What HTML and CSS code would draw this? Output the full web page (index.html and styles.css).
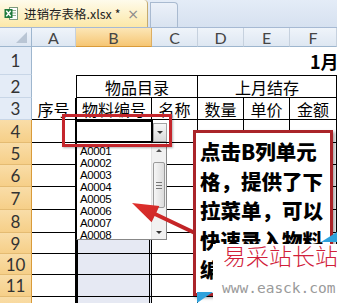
FILE: index.html
```html
<!DOCTYPE html>
<html lang="zh">
<head>
    <meta charset="UTF-8">
    <title>进销存表格.xlsx</title>
    <link rel="stylesheet" href="styles.css">
</head>
<body>
<div class="page">
    <div class="tabbar">
        <div class="tab-file">
            <svg class="xl-icon" width="15" height="15" viewBox="0 0 15 15">
                <rect x="5.5" y="1.5" width="8" height="12" fill="#fff" stroke="#7d9a7d"/>
                <path d="M8 4.5h4M8 7h4M8 9.5h4" stroke="#8fb08f" stroke-width="1"/>
                <rect x="0.5" y="3" width="8" height="9" fill="#1f7a3d"/>
                <path d="M2.3 4.8L6.7 10.2M6.7 4.8L2.3 10.2" stroke="#fff" stroke-width="1.4"/>
            </svg>
            <span class="tab-name">进销存表格.xlsx *</span>
            <span class="tab-close">×</span>
        </div>
        <div class="tab-blank"></div>
    </div>

    <div class="grid">
        <!-- column headers -->
        <div class="corner"><span class="corner-tri"></span></div>
        <div class="ch">A</div>
        <div class="ch on">B</div>
        <div class="ch">C</div>
        <div class="ch">D</div>
        <div class="ch">E</div>
        <div class="ch">F</div>

        <!-- row 1 -->
        <div class="rh">1</div>
        <div class="c title">1月份进销存统计表</div>

        <!-- row 2 -->
        <div class="rh">2</div>
        <div class="c"></div>
        <div class="c t tt tl span2">物品目录</div>
        <div class="c t tt span3">上月结存</div>

        <!-- row 3 -->
        <div class="rh">3</div>
        <div class="c t">序号</div>
        <div class="c t tl">物料编号</div>
        <div class="c t">名称</div>
        <div class="c t">数量</div>
        <div class="c t">单价</div>
        <div class="c t">金额</div>

        <div class="rh on">4</div>
        <div class="c t"></div><div class="c t tl"></div><div class="c t"></div><div class="c t"></div><div class="c t"></div><div class="c t"></div>
        <div class="rh on">5</div>
        <div class="c t"></div><div class="c t tl sel"></div><div class="c t"></div><div class="c t"></div><div class="c t"></div><div class="c t"></div>
        <div class="rh on">6</div>
        <div class="c t"></div><div class="c t tl sel"></div><div class="c t"></div><div class="c t"></div><div class="c t"></div><div class="c t"></div>
        <div class="rh on">7</div>
        <div class="c t"></div><div class="c t tl sel"></div><div class="c t"></div><div class="c t"></div><div class="c t"></div><div class="c t"></div>
        <div class="rh on">8</div>
        <div class="c t"></div><div class="c t tl sel"></div><div class="c t"></div><div class="c t"></div><div class="c t"></div><div class="c t"></div>
        <div class="rh on">9</div>
        <div class="c t"></div><div class="c t tl sel"></div><div class="c t"></div><div class="c t"></div><div class="c t"></div><div class="c t"></div>
        <div class="rh on">10</div>
        <div class="c t"></div><div class="c t tl sel"></div><div class="c t"></div><div class="c t"></div><div class="c t"></div><div class="c t"></div>
        <div class="rh on">11</div>
        <div class="c t"></div><div class="c t tl sel"></div><div class="c t"></div><div class="c t"></div><div class="c t"></div><div class="c t"></div>
        <div class="rh on"></div>
        <div class="c t"></div><div class="c t tl sel"></div><div class="c t"></div><div class="c t"></div><div class="c t"></div><div class="c t"></div>
    </div>

    <!-- overlays: selection, dropdown, annotations -->
    <div class="selbox"></div>
    <div class="active-cell"></div>
    <div class="dd-btn"><span class="tri-down"></span></div>

    <div class="ddlist">
        <div class="dd-items">
            <div>A0001</div>
            <div>A0002</div>
            <div>A0003</div>
            <div>A0004</div>
            <div>A0005</div>
            <div>A0006</div>
            <div>A0007</div>
            <div>A0008</div>
        </div>
        <div class="dd-scroll">
            <div class="sb-arrow"><span class="tri-up"></span></div>
            <div class="sb-track">
                <div class="sb-thumb"><span class="grip"></span></div>
            </div>
            <div class="sb-arrow"><span class="tri-down"></span></div>
        </div>
    </div>

    <div class="redbox"></div>

    <svg class="arrow" width="337" height="303" viewBox="0 0 337 303">
        <defs>
            <linearGradient id="ar" x1="0" y1="0" x2="1" y2="1">
                <stop offset="0" stop-color="#e0302c"/>
                <stop offset="1" stop-color="#b81f24"/>
            </linearGradient>
        </defs>
        <polygon points="132,203 159.4,206.1 156.4,212.4 195.9,231.2 194.1,234.8 154.6,216 151.6,222.3" fill="url(#ar)"/>
    </svg>

    <div class="callout">点击B列单元<br>格，提供了下<br>拉菜单，可以<br>快速录入物料<br>编号等信息</div>

    <div class="watermark">
        <div class="wm-cn">易采站长站</div>
        <div class="wm-url">www.easck.com</div>
    </div>
</div>
</body>
</html>
```

FILE: styles.css
```css
body {
    margin: 0;
    background: #fff;
    font-family: "Noto Sans CJK SC", sans-serif;
    color: #000;
}

.page {
    position: relative;
    width: 337px;
    height: 303px;
    overflow: hidden;
}

/* workbook tab strip */
.tabbar {
    height: 28px;
    display: flex;
    align-items: flex-end;
    background: linear-gradient(#e4ecf7, #d6e1f0);
    border-bottom: 1px solid #a6b9d3;
    box-sizing: border-box;
}

.tab-file {
    width: 148px;
    height: 27px;
    display: flex;
    align-items: center;
    padding-left: 4px;
    box-sizing: border-box;
    background: linear-gradient(#fefbec, #fce8a8);
    border-right: 1px solid #c5ab70;
    border-radius: 0 4px 0 0;
}

.xl-icon {
    flex: none;
}

.tab-name {
    margin-left: 5px;
    font-size: 12.5px;
    color: #1e1e1e;
    white-space: nowrap;
}

.tab-close {
    margin-left: auto;
    margin-right: 8px;
    font-family: "DejaVu Sans", sans-serif;
    font-size: 14px;
    color: #8a8a8a;
}

.tab-blank {
    width: 28px;
    height: 25px;
    margin-left: 2px;
    box-sizing: border-box;
    background: linear-gradient(#ecf1f9, #d9e3f0);
    border: 1px solid #a9bad0;
    border-bottom: none;
    border-radius: 0 4px 0 0;
}

/* sheet grid */
.grid {
    display: grid;
    grid-template-columns: 32px 44px 76px 46px 46px 46px 47px;
    grid-template-rows: 19px 28px 23px 22px 23px 22px 22px 23px 23px 21px 21px 22px 22px;
}

.corner {
    display: flex;
    align-items: flex-end;
    justify-content: flex-end;
    padding: 0 4px 3px 0;
    box-sizing: border-box;
    background: linear-gradient(#eef3fa, #dde6f2);
    border-right: 1px solid #9eb6ce;
    border-bottom: 1px solid #9eb6ce;
}

.corner-tri {
    width: 0;
    height: 0;
    border-left: 11px solid transparent;
    border-bottom: 11px solid #b9c5d4;
}

.ch {
    display: flex;
    align-items: center;
    justify-content: center;
    box-sizing: border-box;
    background: linear-gradient(#eff4fa, #dee7f2);
    border-right: 1px solid #c6d1de;
    border-bottom: 1px solid #9eb6ce;
    font-family: Lato, sans-serif;
    font-size: 16px;
    color: #454545;
}

.ch.on {
    background: linear-gradient(#fce6b6, #f6c674);
    border-right-color: #dcae62;
    border-bottom-color: #d99b3a;
}

.rh {
    display: flex;
    align-items: center;
    justify-content: center;
    box-sizing: border-box;
    background: #e4ecf7;
    border-right: 1px solid #9eb6ce;
    border-bottom: 1px solid #c8d6e7;
    font-family: Lato, sans-serif;
    font-size: 17px;
    color: #333;
}

.rh.on {
    background: linear-gradient(#f9dda8, #f6cf88);
    border-right-color: #d99b3a;
    border-bottom-color: #e4bb72;
}

.c {
    display: flex;
    align-items: center;
    justify-content: center;
    box-sizing: border-box;
    font-size: 16px;
    white-space: nowrap;
    overflow: hidden;
}

.t {
    border-right: 1px solid #000;
    border-bottom: 1px solid #000;
}

.tt {
    border-top: 1px solid #000;
}

.tl {
    border-left: 1px solid #000;
}

.span2 {
    grid-column: span 2;
}

.span3 {
    grid-column: span 3;
}

.title {
    grid-column: span 6;
    justify-content: flex-start;
    padding-left: 278px;
    font-size: 18px;
    font-weight: bold;
}

.sel {
    background: #e6e9f3;
}

/* selection and active cell */
.selbox {
    position: absolute;
    left: 77px;
    top: 120px;
    width: 73px;
    height: 183px;
    box-sizing: border-box;
    border-left: 1px solid #000;
    border-right: 1px solid #000;
}

.active-cell {
    position: absolute;
    left: 75px;
    top: 120px;
    width: 78px;
    height: 23px;
    box-sizing: border-box;
    background: #fff;
    border: 2px solid #000;
    box-shadow: inset 0 0 0 1px #fff;
}

.dd-btn {
    position: absolute;
    left: 153px;
    top: 123px;
    width: 14px;
    height: 19px;
    box-sizing: border-box;
    display: flex;
    align-items: center;
    justify-content: center;
    background: linear-gradient(#f7f7f7, #dadada);
    border: 1px solid #a3a3a3;
}

.tri-down {
    width: 0;
    height: 0;
    border-left: 3px solid transparent;
    border-right: 3px solid transparent;
    border-top: 3px solid #333;
}

.tri-up {
    width: 0;
    height: 0;
    border-left: 3px solid transparent;
    border-right: 3px solid transparent;
    border-bottom: 3px solid #555;
}

/* dropdown list */
.ddlist {
    position: absolute;
    left: 76px;
    top: 143px;
    width: 91px;
    height: 97px;
    box-sizing: border-box;
    display: flex;
    background: #fff;
    border-left: 1px solid #000;
    border-right: 1px solid #888;
    border-bottom: 1px solid #888;
}

.dd-items {
    flex: 1;
    padding: 2px 0 0 3px;
    font-family: "Liberation Sans", sans-serif;
    font-size: 11.5px;
    line-height: 12px;
    letter-spacing: -0.4px;
}

.dd-scroll {
    width: 14px;
    display: flex;
    flex-direction: column;
    background: #f1f1f1;
    border-left: 1px solid #e2e2e2;
}

.sb-arrow {
    height: 14px;
    display: flex;
    align-items: center;
    justify-content: center;
}

.sb-track {
    flex: 1;
    padding-top: 5px;
}

.sb-thumb {
    height: 46px;
    margin: 0 1px;
    box-sizing: border-box;
    display: flex;
    align-items: center;
    justify-content: center;
    background: linear-gradient(90deg, #f6f6f6, #dcdcdc);
    border: 1px solid #9b9b9b;
    border-radius: 2px;
}

.grip {
    width: 6px;
    height: 5px;
    border-top: 1px solid #777;
    border-bottom: 1px solid #777;
    background: linear-gradient(#777, #777) center / 6px 1px no-repeat;
}

/* annotations */
.redbox {
    position: absolute;
    left: 62px;
    top: 114px;
    width: 110px;
    height: 33px;
    box-sizing: border-box;
    border: 3px solid #c4262c;
    box-shadow: 1px 1px 2px rgba(0, 0, 0, 0.3);
}

.arrow {
    position: absolute;
    left: 0;
    top: 0;
}

.callout {
    position: absolute;
    left: 193px;
    top: 130px;
    width: 140px;
    height: 166px;
    box-sizing: border-box;
    padding: 4px 0 0 4px;
    background: #fff;
    border: 3px solid #aa2429;
    box-shadow: 2px 2px 3px rgba(0, 0, 0, 0.35);
    font-size: 20.5px;
    font-weight: 900;
    line-height: 29.5px;
    white-space: nowrap;
    overflow: hidden;
}

.watermark {
    position: absolute;
    left: 213px;
    top: 244px;
    right: 0;
    bottom: 0;
    background: #fff;
    white-space: nowrap;
}

.watermark::before {
    content: "";
    position: absolute;
    right: 0;
    top: -12px;
    border-left: 16px solid transparent;
    border-bottom: 10px solid #2fa2dc;
}

.watermark::after {
    content: "";
    position: absolute;
    left: -16px;
    bottom: 0;
    border-right: 16px solid transparent;
    border-top: 11px solid #2fa2dc;
}

.wm-cn {
    padding-left: 10px;
    font-size: 23px;
    font-weight: 300;
    line-height: 22px;
    color: #d1203a;
}

.wm-url {
    margin-top: 12px;
    padding-left: 9px;
    font-family: "DejaVu Sans Mono", monospace;
    font-size: 14.5px;
    line-height: 20px;
    color: #9a9a9a;
}
```
